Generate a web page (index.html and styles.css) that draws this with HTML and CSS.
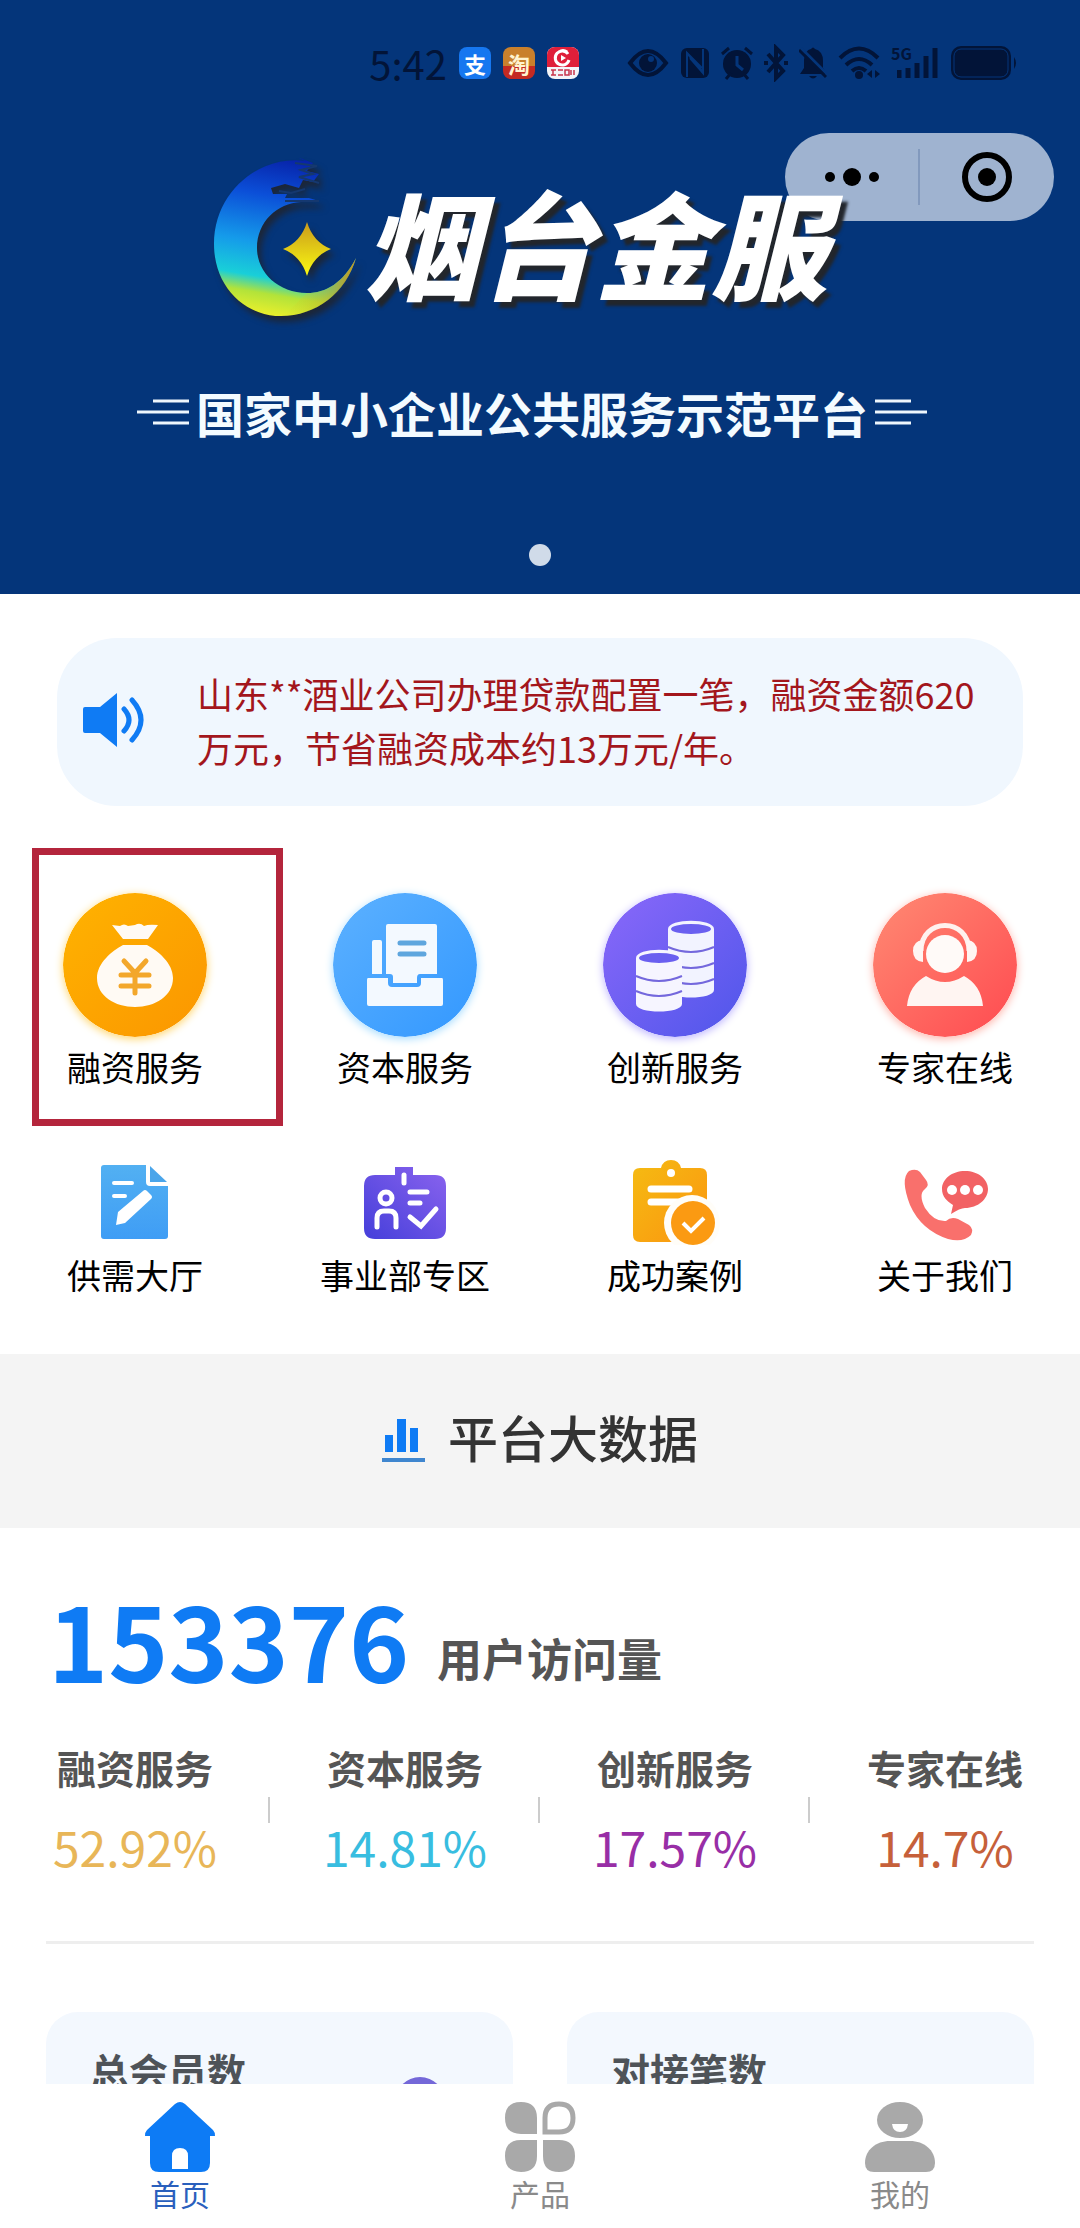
FILE: index.html
```html
<!DOCTYPE html>
<html lang="zh-CN">
<head>
    <meta charset="UTF-8">
    <meta name="viewport" content="width=device-width, initial-scale=1">
    <title>烟台金服</title>
    <link rel="stylesheet" href="styles.css">
</head>
<body>
<div class="app">
    <main class="content">
        <header class="hero">
            <div class="status">
                <span class="time">5:42</span>
                <div class="status-apps">
                    <span class="app-badge pay">支</span>
                    <span class="app-badge shop">淘</span>
                    <svg class="app-badge" viewBox="0 0 32 32">
                        <rect width="32" height="32" fill="#f4f4f8"/>
                        <path d="M0 0h32v20H0z" fill="#df1f3a"/>
                        <path d="M21 7a7 7 0 1 0 1 6M12 5q4-3 8 0" fill="none" stroke="#fff" stroke-width="3"/>
                        <path d="M14 8l5 3-5 3z" fill="#fff"/>
                        <path d="M4 23h5M6 23v5M4 28h5M11 23h5M11 28h5M18 23h4v5h-4zM24 23v5M27 23v5" fill="none" stroke="#c8354c" stroke-width="1.5"/>
                    </svg>
                </div>
                <div class="status-icons">
                    <svg width="42" height="38" viewBox="0 0 42 38">
                        <path d="M3 19Q21-5 39 19 21 43 3 19z" fill="none" stroke="currentColor" stroke-width="4"/>
                        <circle cx="21" cy="19" r="9" fill="currentColor"/>
                        <circle cx="24" cy="15" r="3" fill="#04357a"/>
                    </svg>
                    <svg width="30" height="38" viewBox="0 0 30 38">
                        <rect x="1" y="4" width="28" height="30" rx="6" fill="currentColor"/>
                        <path d="M7 33V9l15 15M10 14l13 15V5M7 9l16 19" fill="none" stroke="#04357a" stroke-width="2"/>
                    </svg>
                    <svg width="32" height="38" viewBox="0 0 32 38">
                        <circle cx="16" cy="20" r="14" fill="currentColor"/>
                        <path d="M1 10l7-6M31 10l-7-6M5 35l5-6M27 35l-5-6" stroke="currentColor" stroke-width="3"/>
                        <path d="M16 12v9l6 5" fill="none" stroke="#04357a" stroke-width="3"/>
                    </svg>
                    <svg width="24" height="38" viewBox="0 0 24 38">
                        <path d="M4 10l15 17-7 7V4l7 7L4 28" fill="none" stroke="currentColor" stroke-width="4"/>
                        <path d="M0 19h4M20 19h4" stroke="currentColor" stroke-width="4"/>
                    </svg>
                    <svg width="28" height="38" viewBox="0 0 28 38">
                        <path d="M1 30l4-6v-8Q6 6 12 5q2-3 4 0 8 2 8 12v7l4 6zM10 32h8q-4 5-8 0z" fill="currentColor"/>
                        <path d="M2 4l28 28" stroke="#04357a" stroke-width="3"/>
                        <path d="M0 6l27 27" stroke="currentColor" stroke-width="3"/>
                    </svg>
                    <svg width="42" height="38" viewBox="0 0 42 38">
                        <path d="M2 14Q21-5 40 14M8 21q13-12 26 0M14 27q7-6 14 0" fill="none" stroke="currentColor" stroke-width="4"/>
                        <circle cx="21" cy="31" r="4" fill="currentColor"/>
                        <path d="M34 26v8l-5-4zM37 26v8l5-4z" fill="currentColor"/>
                    </svg>
                    <div class="signal">
                        <span>5G</span>
                        <svg width="42" height="34" viewBox="0 0 42 34">
                            <path d="M2 24v8M11 22v10M20 17v15M29 10v22M38 2v30" stroke="currentColor" stroke-width="5"/>
                        </svg>
                    </div>
                    <svg width="68" height="38" viewBox="0 0 68 38">
                        <rect x="1" y="2" width="60" height="34" rx="10" fill="currentColor"/>
                        <rect x="4" y="5" width="54" height="28" rx="7" fill="none" stroke="#04357a" stroke-width="1"/>
                        <path d="M64 13q4 6 0 12z" fill="currentColor"/>
                    </svg>
                </div>
            </div>

            <div class="capsule">
                <button type="button" aria-label="更多">
                    <svg width="54" height="54" viewBox="0 0 54 54">
                        <circle cx="5" cy="27" r="5"/><circle cx="27" cy="27" r="9"/><circle cx="49" cy="27" r="5"/>
                    </svg>
                </button>
                <button type="button" aria-label="关闭">
                    <svg width="54" height="54" viewBox="0 0 54 54">
                        <circle cx="27" cy="27" r="22" fill="none" stroke="#000" stroke-width="6"/><circle cx="27" cy="27" r="9"/>
                    </svg>
                </button>
            </div>

            <div class="brand">
                <div class="brand-logo">
                    <svg class="moon" width="148" height="164" viewBox="0 0 148 164">
                        <defs>
                            <linearGradient id="moon" x1="0.5" y1="0" x2="0.35" y2="1">
                                <stop offset="0" stop-color="#0722a8"/>
                                <stop offset="0.25" stop-color="#0b4fd8"/>
                                <stop offset="0.55" stop-color="#159bea"/>
                                <stop offset="0.76" stop-color="#19cfd8"/>
                                <stop offset="0.86" stop-color="#b2e33a"/>
                                <stop offset="1" stop-color="#eef02a"/>
                            </linearGradient>
                            <linearGradient id="tail" x1="0" y1="0" x2="1" y2="0">
                                <stop offset="0" stop-color="#d5dc2a" stop-opacity="0"/>
                                <stop offset="1" stop-color="#c79a18"/>
                            </linearGradient>
                            <linearGradient id="star" x1="0" y1="0" x2="0" y2="1">
                                <stop offset="0" stop-color="#c99a1b"/>
                                <stop offset="1" stop-color="#fbfb12"/>
                            </linearGradient>
                        </defs>
                        <path d="M92 3C46-3 1 34 1 86c0 42 30 72 67 72 35 0 64-23 75-58-13 25-30 35-49 35-28 0-50-20-50-45 0-26 20-45 44-46l18-1-10-3H72l2-4H60l-2-6 14-4 14 4 4-8 10 2 6-8-12-3 6-8-16-6z" fill="url(#moon)"/>
                        <path d="M70 158c34-1 63-23 73-58-13 25-30 35-49 35z" fill="url(#tail)"/>
                        <path d="M82 5l22 3-16 4 12 4-14 3 20 6M66 33l12 2 14-4M72 43l34 0" fill="none" stroke="#15386f" stroke-width="2"/>
                        <path d="M94 64q6 20 24 27-18 7-24 27-6-20-24-27 18-7 24-27z" fill="url(#star)"/>
                    </svg>
                    <h1>烟台金服</h1>
                </div>
                <div class="brand-sub">
                    <svg width="52" height="28" viewBox="0 0 52 28">
                        <path d="M16 3h36M0 14h52M16 25h36" stroke="#eef6fc" stroke-width="3"/>
                    </svg>
                    <p>国家中小企业公共服务示范平台</p>
                    <svg width="52" height="28" viewBox="0 0 52 28">
                        <path d="M0 3h36M0 14h52M0 25h36" stroke="#eef6fc" stroke-width="3"/>
                    </svg>
                </div>
            </div>
            <span class="dot"></span>
        </header>

        <section class="notice">
            <svg width="62" height="56" viewBox="0 0 62 56">
                <path d="M2 15h15L34 1v54L17 41H2q-2 0-2-2V17q0-2 2-2z" fill="#0f7bf4"/>
                <path d="M41 17q10 11 0 22M49 8q18 20 0 40" fill="none" stroke="#0f7bf4" stroke-width="5" stroke-linecap="round"/>
            </svg>
            <p>山东**酒业公司办理贷款配置一笔，融资金额620万元，节省融资成本约13万元/年。</p>
        </section>

        <nav class="services">
            <a href="#" class="service selected">
                <svg class="round orange" viewBox="0 0 144 144">
                    <defs><linearGradient id="g1" x1="0" y1="0" x2="1" y2="1"><stop offset="0" stop-color="#ffb300"/><stop offset="1" stop-color="#fb9600"/></linearGradient></defs>
                    <circle cx="72" cy="72" r="72" fill="url(#g1)"/>
                    <path d="M49 32l8 1q4-3 8 0l7-1q5-3 9 1 4-2 14-1L85 46H60zM60 52h24c11 6 26 18 26 33 0 18-18 29-38 29S34 103 34 85c0-15 15-27 26-33z" fill="#fffaf4"/>
                    <path d="M61 68l11 12 11-12M58 82h28M58 93h28M72 80v20" fill="none" stroke="#f3a72b" stroke-width="5" stroke-linecap="round"/>
                </svg>
                <span>融资服务</span>
            </a>
            <a href="#" class="service">
                <svg class="round blue" viewBox="0 0 144 144">
                    <defs><linearGradient id="g2" x1="0" y1="0" x2="1" y2="1"><stop offset="0" stop-color="#5cb1ff"/><stop offset="1" stop-color="#3398ff"/></linearGradient></defs>
                    <circle cx="72" cy="72" r="72" fill="url(#g2)"/>
                    <path d="M55 31h47q2 0 2 2v48H87q-3 0-3 4v5H60v-6q0-3-3-3h-4V33q0-2 2-2zM41 47h6q2 0 2 2v32H39V49q0-2 2-2zM35 85h20v5q0 4 4 4h25q4 0 4-4v-5h21q1 0 1 2v24q0 2-2 2H36q-2 0-2-2V87q0-2 1-2z" fill="#f3f9ff"/>
                    <path d="M67 50h24M67 61h24" stroke="#5ea6de" stroke-width="5" stroke-linecap="round"/>
                </svg>
                <span>资本服务</span>
            </a>
            <a href="#" class="service">
                <svg class="round violet" viewBox="0 0 144 144">
                    <defs><linearGradient id="g3" x1="0" y1="0" x2="1" y2="1"><stop offset="0" stop-color="#8a68fa"/><stop offset="1" stop-color="#4f56ea"/></linearGradient></defs>
                    <circle cx="72" cy="72" r="72" fill="url(#g3)"/>
                    <path d="M65 36c0-11 46-11 46 0v61c0 10-46 10-46 0z" fill="#f2f3ff"/>
                    <ellipse cx="88" cy="36" rx="20" ry="5" fill="#6a5ff0"/>
                    <path d="M65 54q23 10 46 0M65 70q23 10 46 0M65 86q23 10 46 0" fill="none" stroke="#7468dd" stroke-width="2"/>
                    <path d="M33 65c0-11 46-11 46 0v46c0 10-46 10-46 0z" fill="#f6f5ff"/>
                    <ellipse cx="56" cy="65" rx="20" ry="5" fill="#6a5ff0"/>
                    <path d="M33 83q23 10 46 0M33 98q23 10 46 0" fill="none" stroke="#7468dd" stroke-width="2"/>
                </svg>
                <span>创新服务</span>
            </a>
            <a href="#" class="service">
                <svg class="round red" viewBox="0 0 144 144">
                    <defs><linearGradient id="g4" x1="0" y1="0" x2="1" y2="1"><stop offset="0" stop-color="#ff8a73"/><stop offset="1" stop-color="#ff4a50"/></linearGradient></defs>
                    <circle cx="72" cy="72" r="72" fill="url(#g4)"/>
                    <circle cx="72" cy="61" r="19" fill="#fffaf8"/>
                    <path d="M48 58c0-34 48-34 48 0" fill="none" stroke="#fff1ee" stroke-width="5"/>
                    <path d="M50 47v22q-10-1-10-11t10-11zM94 47v22q10-1 10-11T94 47zM53 83q19 12 38 0 17 9 19 30H34q2-21 19-30z" fill="#fff5f2"/>
                </svg>
                <span>专家在线</span>
            </a>
            <a href="#" class="service">
                <svg class="small" viewBox="0 0 92 92">
                    <defs><linearGradient id="g5" x1="0" y1="0" x2="0" y2="1"><stop offset="0" stop-color="#52b0f2"/><stop offset="1" stop-color="#3f9df5"/></linearGradient></defs>
                    <path d="M15 12h42v17q0 4 4 4h18v50q0 3-3 3H15q-3 0-3-3V15q0-3 3-3z" fill="url(#g5)"/>
                    <path d="M61 13l17 16H61z" fill="#4aa5ea"/>
                    <path d="M25 30h18M25 43h11" stroke="#fff" stroke-width="4" stroke-linecap="round"/>
                    <path d="M27 72l2-13 25-21q2-2 4 0l4 4q2 2 0 4L36 70z" fill="#fff"/>
                </svg>
                <span>供需大厅</span>
            </a>
            <a href="#" class="service">
                <svg class="small" viewBox="0 0 92 92">
                    <defs><linearGradient id="g6" x1="1" y1="0" x2="0" y2="1"><stop offset="0" stop-color="#8a63ee"/><stop offset="1" stop-color="#453fda"/></linearGradient></defs>
                    <path d="M36 14h18v8h22q11 0 11 11v42q0 11-11 11H16Q5 86 5 75V33q0-11 11-11h20z" fill="url(#g6)"/>
                    <path d="M45 22v8" stroke="#fff" stroke-width="5" stroke-linecap="round"/>
                    <circle cx="27" cy="45" r="6" fill="none" stroke="#fff" stroke-width="5"/>
                    <path d="M18 74v-9q0-7 7-7h5q7 0 7 7v9M51 39h17M51 50h10M51 64l11 9 15-17" fill="none" stroke="#fff" stroke-width="5" stroke-linecap="round"/>
                </svg>
                <span>事业部专区</span>
            </a>
            <a href="#" class="service">
                <svg class="small" viewBox="0 0 92 92">
                    <defs><linearGradient id="g7" x1="0" y1="0" x2="1" y2="1"><stop offset="0" stop-color="#f5bb12"/><stop offset="1" stop-color="#fb9510"/></linearGradient></defs>
                    <path d="M11 15h21q2-8 10-8t10 8h19q7 0 7 7v60q0 7-7 7H11q-7 0-7-7V22q0-7 7-7z" fill="url(#g7)"/>
                    <circle cx="42" cy="20" r="4" fill="#fff"/>
                    <path d="M22 36h38M22 49h36" stroke="#fff" stroke-width="7" stroke-linecap="round"/>
                    <circle cx="63" cy="70" r="28" fill="#fffdf8"/>
                    <circle cx="64" cy="70" r="22" fill="#fb9a12"/>
                    <path d="M54 70l8 8 13-13" fill="none" stroke="#fff" stroke-width="4"/>
                </svg>
                <span>成功案例</span>
            </a>
            <a href="#" class="service">
                <svg class="small" viewBox="0 0 92 92">
                    <path d="M10 18q7-3 11 1l6 8q4 5-1 9-7 5 0 19 9 14 21 13 5-5 12-2l11 6q5 4 2 10-8 8-23 4Q22 77 11 52 1 26 10 18z" fill="#f9706c"/>
                    <path d="M66 18c13 0 23 8 23 18s-10 19-23 19q-5 0-14 6l2-9c-6-4-11-8-11-16 0-10 10-18 23-18z" fill="#f26264"/>
                    <circle cx="53" cy="37" r="5" fill="#fff"/><circle cx="66" cy="37" r="5" fill="#fff"/><circle cx="79" cy="37" r="5" fill="#fff"/>
                </svg>
                <span>关于我们</span>
            </a>
        </nav>

        <h2 class="band">
            <svg width="44" height="54" viewBox="0 0 44 54">
                <path d="M3 26h8v17H3zM15 10h9v33h-9zM28 19h8v24h-8z" fill="#0f7bf4"/>
                <path d="M0 49h43v4H0z" fill="#3f86cf"/>
            </svg>
            平台大数据
        </h2>

        <section class="data">
            <div class="visits"><strong>153376</strong><span>用户访问量</span></div>
            <ul class="rates">
                <li><span>融资服务</span><b class="c-gold">52.92%</b></li>
                <li><span>资本服务</span><b class="c-cyan">14.81%</b></li>
                <li><span>创新服务</span><b class="c-purple">17.57%</b></li>
                <li><span>专家在线</span><b class="c-rust">14.7%</b></li>
            </ul>
            <div class="cards">
                <div class="card">
                    <h3>总会员数</h3>
                    <span class="card-icon"></span>
                </div>
                <div class="card">
                    <h3>对接笔数</h3>
                </div>
            </div>
        </section>
    </main>

    <nav class="tabs">
        <a href="#" class="active">
            <svg width="72" height="72" viewBox="0 0 72 72">
                <path d="M31 3q5-4 10 0l28 26q2 2 2 6h-5v27q0 9-9 9H15q-9 0-9-9V35H1q0-4 2-6z" fill="#0d7bf5"/>
                <path d="M28 68V55q0-8 8-8t8 8v13z" fill="#fff"/>
            </svg>
            <span>首页</span>
        </a>
        <a href="#">
            <svg width="72" height="72" viewBox="0 0 72 72">
                <path d="M17 1q16 0 16 16v16H17Q1 33 1 17T17 1zM17 39h16v16q0 16-16 16T1 55t16-16zM39 39h16q16 0 16 16T55 71 39 55z" fill="#a9a9a9"/>
                <path d="M55 3q14 0 14 14T55 31H41V17Q41 3 55 3z" fill="none" stroke="#a9a9a9" stroke-width="5"/>
            </svg>
            <span>产品</span>
        </a>
        <a href="#">
            <svg width="72" height="72" viewBox="0 0 72 72">
                <ellipse cx="36" cy="19" rx="23" ry="18" fill="#a9a9a9"/>
                <path d="M28 23h16q-1 8-8 8t-8-8z" fill="#fff"/>
                <path d="M26 40h20c14 0 25 9 25 22q0 9-9 9H10q-9 0-9-9c0-13 11-22 25-22z" fill="#a9a9a9"/>
            </svg>
            <span>我的</span>
        </a>
    </nav>
</div>
</body>
</html>
```

FILE: styles.css
```css
* {
    box-sizing: border-box;
}

html, body {
    margin: 0;
    padding: 0;
    background-color: #ffffff;
    color: #000000;
    font-family: "Noto Sans CJK SC", "Liberation Sans", sans-serif;
}

h1, h2, h3, p, ul {
    margin: 0;
    padding: 0;
}

a {
    color: inherit;
    text-decoration: none;
}

svg {
    display: block;
    flex: none;
}

.app {
    display: flex;
    flex-direction: column;
    height: 100vh;
}

.content {
    flex: 1;
    min-height: 0;
    overflow-y: auto;
    scrollbar-width: none;
}

/* top banner */
.hero {
    position: relative;
    display: flex;
    flex-direction: column;
    align-items: center;
    padding-bottom: 28px;
    background-color: #04357a;
}

.status {
    display: flex;
    align-items: center;
    align-self: stretch;
    justify-content: flex-end;
    height: 84px;
    padding: 42px 62px 0 0;
    color: #021438;
}

.time {
    margin-right: 12px;
    font-size: 40px;
    line-height: 40px;
}

.status-apps {
    display: flex;
    gap: 12px;
    margin-right: 48px;
}

.app-badge {
    width: 32px;
    height: 32px;
    border-radius: 8px;
    color: #ffffff;
    font-size: 22px;
    font-weight: 700;
    line-height: 32px;
    text-align: center;
}

.pay {
    background-color: #1677f0;
}

.shop {
    background: linear-gradient(#c9802c 60%, #c42a22 60%);
    color: #fff3d0;
}

.status-icons {
    display: flex;
    align-items: center;
    gap: 11px;
}

.signal {
    position: relative;
    padding-left: 6px;
}

.signal span {
    position: absolute;
    top: -2px;
    left: 0;
    font-size: 16px;
    font-weight: 700;
    line-height: 18px;
}

.capsule {
    position: absolute;
    top: 133px;
    right: 26px;
    display: flex;
    width: 269px;
    height: 88px;
    border-radius: 44px;
    background-color: #9fb3d0;
}

.capsule button {
    display: flex;
    flex: 1;
    align-items: center;
    justify-content: center;
    padding: 0;
    border: none;
    background: linear-gradient(#8299bd, #8299bd) right center / 2px 56px no-repeat;
    cursor: pointer;
}

.capsule button:last-child {
    background: none;
}

.brand {
    position: relative;
    z-index: 1;
    padding: 74px 16px 0 0;
    pointer-events: none;
}

.brand-logo {
    display: flex;
    align-items: center;
    justify-content: center;
    gap: 2px;
    padding-right: 24px;
}

.moon {
    filter: drop-shadow(4px 6px 3px #1c2638);
}

.brand h1 {
    color: #ffffff;
    font-size: 116px;
    font-style: italic;
    font-weight: 900;
    line-height: 150px;
    text-shadow: 5px 6px 3px #22262c;
}

.brand-sub {
    display: flex;
    align-items: center;
    justify-content: center;
    gap: 7px;
    margin-top: 62px;
    color: #f4fbff;
    font-size: 48px;
    font-weight: 700;
    line-height: 56px;
}

.dot {
    width: 22px;
    height: 22px;
    margin-top: 104px;
    border-radius: 50%;
    background-color: #d0dbe9;
}

/* scrolling notice */
.notice {
    display: flex;
    align-items: center;
    gap: 52px;
    margin: 44px 57px 0;
    padding: 28px 32px 32px 26px;
    border-radius: 60px;
    background-color: #f0f7fe;
    color: #a3161c;
    font-size: 36px;
    line-height: 54px;
}

/* service shortcuts */
.services {
    display: grid;
    grid-template-columns: repeat(4, 1fr);
    row-gap: 62px;
    padding: 87px 0 55px;
}

.service {
    position: relative;
    display: flex;
    flex-direction: column;
    align-items: center;
    gap: 6px;
    font-size: 34px;
    line-height: 48px;
}

.selected::after {
    content: "";
    position: absolute;
    top: -45px;
    right: -13px;
    bottom: -35px;
    left: 32px;
    border: 7px solid #b4253c;
}

.round {
    width: 144px;
    height: 144px;
    border-radius: 50%;
}

.orange {
    box-shadow: 0 2px 8px #ffd56b;
}

.blue {
    box-shadow: 0 2px 8px #a5dcff;
}

.violet {
    box-shadow: 0 2px 8px #bdb4ff;
}

.red {
    box-shadow: 0 2px 8px #ffb3a8;
}

.small {
    width: 92px;
    height: 92px;
}

/* section title */
.band {
    display: flex;
    align-items: center;
    justify-content: center;
    gap: 22px;
    padding: 46px 0 56px;
    background-color: #f4f4f4;
    color: #333333;
    font-size: 50px;
    font-weight: 500;
    line-height: 72px;
}

.data {
    padding: 56px 46px 0;
}

.visits {
    display: flex;
    align-items: flex-end;
    gap: 28px;
    padding-left: 2px;
}

.visits strong {
    color: #0f7bf4;
    font-size: 102px;
    line-height: 110px;
}

.visits span {
    color: #555555;
    font-size: 45px;
    font-weight: 700;
    line-height: 72px;
}

.rates {
    display: grid;
    grid-template-columns: repeat(4, 1fr);
    margin: 45px -46px 0;
    list-style: none;
    text-align: center;
}

.rates li {
    background: linear-gradient(#cccccc, #cccccc) right 58px / 2px 26px no-repeat;
}

.rates li:last-child {
    background: none;
}

.rates span,
.rates b {
    display: block;
}

.rates span {
    color: #555555;
    font-size: 39px;
    font-weight: 700;
    line-height: 56px;
}

.rates b {
    margin-top: 16px;
    font-size: 48px;
    font-weight: 400;
    line-height: 70px;
}

.c-gold {
    color: #e8b658;
}

.c-cyan {
    color: #38bde0;
}

.c-purple {
    color: #982ea6;
}

.c-rust {
    color: #c6603a;
}

.cards {
    display: grid;
    grid-template-columns: 1fr 1fr;
    gap: 54px;
    margin-top: 60px;
    padding-top: 68px;
    border-top: 3px solid #eeeeee;
}

.card {
    display: flex;
    justify-content: space-between;
    padding: 30px 68px 60px 44px;
    border-radius: 32px;
    background-color: #f3f8fe;
}

.card h3 {
    color: #4e5358;
    font-size: 39px;
    font-weight: 700;
    line-height: 56px;
}

.card-icon {
    width: 50px;
    height: 50px;
    margin-top: 35px;
    border-radius: 50%;
    background-color: #7468d8;
}

/* bottom tab bar */
.tabs {
    display: flex;
    padding: 17px 0 14px;
    background-color: #ffffff;
}

.tabs a {
    display: flex;
    flex: 1;
    flex-direction: column;
    align-items: center;
    color: #8a8a8a;
    font-size: 30px;
    line-height: 41px;
}

.tabs .active {
    color: #2a60bd;
}
```
